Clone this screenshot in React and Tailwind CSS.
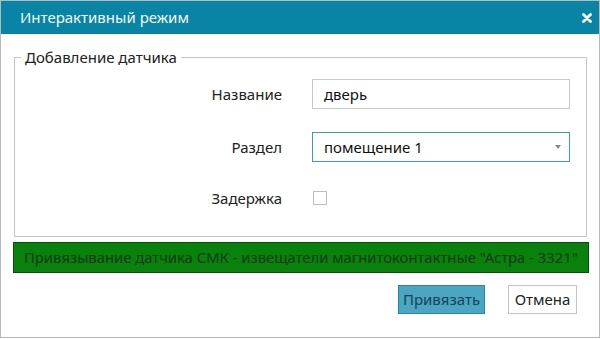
import React from "react";

export default function App() {
  return (
    <div
      className="w-[600px] h-[338px] bg-white border border-[#b9b9b9] flex flex-col overflow-hidden"
      style={{ fontFamily: '"Noto Sans", "Open Sans", sans-serif' }}
    >
      <div className="h-[33px] bg-[#0a84a4] flex items-center justify-between pl-[19px] pr-[7px] shrink-0">
        <span className="text-[#f2fbfd] text-[15px]">Интерактивный режим</span>
        <svg width="10" height="10" viewBox="0 0 10 10">
          <path d="M1.5 1.5 L8.5 8.5 M8.5 1.5 L1.5 8.5" stroke="white" strokeWidth="2.8" strokeLinecap="round" />
        </svg>
      </div>

      <div className="px-[12px] pt-[14px] flex flex-col">
        <fieldset className="border border-[#c4c4c4] ml-[1px] mr-0 pb-[23px] pt-0 px-0">
          <legend className="ml-[6px] px-[4px] text-[15px] text-[#222] leading-[18px]">Добавление датчика</legend>
          <div className="flex flex-col mt-[13px]">
            <div className="flex items-center h-[30px]">
              <span className="w-[267px] text-right text-[15px] text-[#222]">Название</span>
              <div className="ml-[30px] w-[258px] h-[30px] border border-[#c9c9c9] flex items-center pl-[11px] text-[15px] text-[#111]">
                дверь
              </div>
            </div>

            <div className="flex items-center h-[30px] mt-[23px]">
              <span className="w-[267px] text-right text-[15px] text-[#222]">Раздел</span>
              <div className="ml-[30px] w-[258px] h-[30px] border border-[#3f9db3] flex items-center justify-between pl-[11px] pr-[8px] text-[15px] text-[#111]">
                <span>помещение 1</span>
                <span className="w-0 h-0 border-l-[3px] border-r-[3px] border-t-[4px] border-l-transparent border-r-transparent border-t-[#888]" />
              </div>
            </div>

            <div className="flex items-center h-[30px] mt-[21px]">
              <span className="w-[267px] text-right text-[15px] text-[#222]">Задержка</span>
              <span className="ml-[31px] w-[14px] h-[14px] border border-[#bdbdbd] bg-white" />
            </div>
          </div>
        </fieldset>

        <div className="mt-[5px] mr-[-2px] h-[31px] bg-[#0a800d] border border-[#0b4a10] flex items-center pl-[10px] text-[14.8px] text-[#0c3d10] whitespace-nowrap">
          Привязывание датчика СМК - извещатели магнитоконтактные "Астра - 3321"
        </div>

        <div className="flex justify-end gap-[23px] mt-[12px] pr-[10px]">
          <button className="w-[87px] h-[29px] bg-[#4aa6c3] border border-[#2e86a5] text-[15px] text-[#17425a]">
            Привязать
          </button>
          <button className="w-[69px] h-[29px] bg-white border border-[#c4c4c4] text-[15px] text-[#222]">
            Отмена
          </button>
        </div>
      </div>
    </div>
  );
}
